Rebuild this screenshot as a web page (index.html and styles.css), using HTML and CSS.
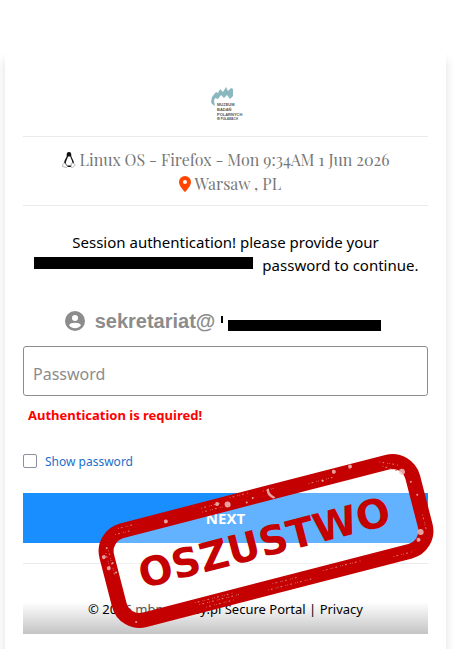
FILE: index.html
```html
<!DOCTYPE html>
<html lang="en">
<head>
    <meta charset="UTF-8">
    <meta name="viewport" content="width=device-width, initial-scale=1.0">
    <title>Session authentication</title>
    <link rel="stylesheet" href="styles.css">
</head>
<body>
    <main class="card">
        <header class="brand">
            <svg class="logo" viewBox="0 0 40 40" role="img" aria-label="Muzeum Badań Polarnych">
                <path class="logo-wave" d="M5 18 L6 13 L10 8 L12 9 L14 5 L17 8 L20 3 L22 7 L25 4 L27 5 L27 12 L24 15 L21 11 L18 14 L15 11 L12 15 L9 14 L8 17 L9 22 L6 20 Z"/>
                <text x="11" y="22">MUZEUM</text>
                <text x="11" y="27">BADAŃ</text>
                <text x="11" y="32">POLARNYCH</text>
                <text class="logo-small" x="11" y="36">W PUŁAWACH</text>
            </svg>
        </header>

        <div class="device">
            <div>
                <svg class="tux" viewBox="0 0 14 16" aria-hidden="true">
                    <path fill="#111" d="M7 0 C4.800 0 4.500 1.800 4.700 4 C4.800 5.500 2.300 7.600 2 11 L3 13 L5 15 H9 L11 13 L12 11 C11.700 7.600 9.300 5.800 9.300 4 C9.400 1.500 9 0 7 0 Z"/>
                    <path fill="#fff" d="M6 4.500 L8.300 4.500 C8.500 6.500 10.500 8 10.300 11 L9 13.500 H5 L3.800 11 C4 8.500 5.700 6.500 6 4.500 Z"/>
                    <path fill="#fff" stroke="#999" stroke-width=".7" d="M2.500 10.800 L5.500 14.500 L4.500 15.600 L.5 14.500 L1 12.300 Z M11 10.800 L13.300 13.200 L10.500 15.600 L9 15 L9.300 11.500 Z"/>
                </svg>
                Linux OS - Firefox - Mon 9:34AM 1 Jun 2026
            </div>
            <div class="location">
                <svg class="pin" viewBox="0 0 12 16" aria-hidden="true">
                    <path fill="#ff4500" fill-rule="evenodd" d="M6 0 a6 6 0 0 0 -6 6 c0 3.500 3.500 7 5.300 9.600 q.7 .8 1.400 0 C8.500 13 12 9.500 12 6 a6 6 0 0 0 -6 -6 Z M6 4 a2 2 0 1 1 0 4 a2 2 0 1 1 0 -4 Z"/>
                </svg>
                Warsaw , PL
            </div>
        </div>

        <p class="prompt">
            Session authentication! please provide your
            <span class="redacted redacted-name"></span> password to continue.
        </p>

        <form>
            <div class="account">
                <svg class="user" viewBox="0 0 20 20" aria-hidden="true">
                    <circle cx="10" cy="10" r="10" fill="#8c8c8c"/>
                    <circle cx="10" cy="7" r="3" fill="#fff"/>
                    <path fill="#fff" d="M4 14.300 C5 11 15 11 16 14.300 C13 18.200 7 18.200 4 14.300 Z"/>
                </svg>
                <span>sekretariat@</span>
                <span class="tick"></span>
                <span class="redacted redacted-domain"></span>
            </div>

            <input class="password" type="password" id="password" placeholder="Password" aria-label="Password">
            <div class="error">Authentication is required!</div>

            <label class="show" for="show">
                <input type="checkbox" id="show">
                Show password
            </label>

            <button type="button" class="next">NEXT</button>
        </form>

        <footer class="footer">© 2026 mbppulawy.pl Secure Portal | <a href="#">Privacy</a></footer>

        <svg class="stamp" viewBox="0 0 340 180" role="img" aria-label="OSZUSTWO">
            <g transform="rotate(-14.500 170 90)">
                <rect class="stamp-frame" x="12" y="44" width="316" height="92" rx="21"/>
                <text class="stamp-text" x="168" y="105" text-anchor="middle">OSZUSTWO</text>
                <g class="grain">
                    <path d="M26 46 h18 M116 42 h20 M146 39 h20 M226 45 h24 M300 42 l18 8 M90 135 h42 M160 138 h46 M218 133 h40 M290 137 h20"/>
                    <path d="M30 41 h14 M116 46 h22 M180 41 h12 M302 47 l16 10 M96 139 h30 M86 132 h40 M166 133 h24 M12 62 v18 M15 60 v26 M328 104 v14"/>
                </g>
                <g class="specks">
                    <circle cx="9" cy="65" r="2"/>
                    <circle cx="11" cy="77" r="2"/>
                    <circle cx="16" cy="73" r="1"/>
                    <circle cx="14" cy="57" r="1"/>
                    <circle cx="17" cy="83" r="1"/>
                    <circle cx="78" cy="46" r="2"/>
                    <circle cx="132" cy="42" r="2"/>
                    <circle cx="142" cy="45" r="3"/>
                    <circle cx="161" cy="48" r="1"/>
                    <circle cx="168" cy="45" r="1"/>
                    <circle cx="240" cy="46" r="1"/>
                    <circle cx="253" cy="40" r="2"/>
                    <circle cx="270" cy="39" r="2"/>
                    <circle cx="319" cy="57" r="3"/>
                    <circle cx="325" cy="69" r="1"/>
                    <circle cx="328" cy="83" r="1"/>
                    <circle cx="322" cy="120" r="3"/>
                    <circle cx="318" cy="127" r="2"/>
                    <circle cx="24" cy="136" r="1"/>
                    <path d="M184 40 q-3 6 4 11 l2 -1 q-6 -5 -4 -10 Z"/>
                </g>
            </g>
        </svg>
    </main>
</body>
</html>
```
FILE: styles.css
```css
* {
    box-sizing: border-box;
}

body {
    margin: 0;
    padding: 52px 19px 0 5px;
    background-color: #fff;
    color: #111;
    font-family: 'Noto Sans', 'Open Sans', sans-serif;
    font-size: 15px;
}

.card {
    position: relative;
    padding: 32px 18px 16px;
    background-color: #fff;
    box-shadow: 0 8px 10px rgba(0, 0, 0, 0.13);
}

.brand {
    display: flex;
    justify-content: center;
    height: 53px;
    border-bottom: 1px solid #eaeaea;
}

.logo {
    width: 40px;
    height: 40px;
    overflow: visible;
    font-family: 'Liberation Sans', Arial, sans-serif;
    font-size: 4px;
    font-weight: bold;
    fill: #555;
}

.logo-wave {
    fill: #8bb8bf;
}

.logo-small {
    font-size: 3px;
}

.device {
    padding: 11px 0 9px;
    border-bottom: 1px solid #eaeaea;
    color: #777;
    font-family: 'Playfair Display', 'Liberation Serif', serif;
    font-size: 16px;
    line-height: 24px;
    text-align: center;
}

.location {
    padding-left: 9px;
}

.tux {
    width: 14px;
    height: 16px;
    vertical-align: -2px;
}

.pin {
    width: 12px;
    height: 16px;
    vertical-align: -2px;
}

.prompt {
    margin: 25px 0 0;
    color: #000;
    line-height: 23px;
    text-align: center;
}

.redacted {
    display: inline-block;
    background-color: #000;
}

.redacted-name {
    width: 219px;
    height: 12px;
    margin: 0 5px 0 2px;
    vertical-align: 2px;
}

.account {
    display: flex;
    align-items: center;
    justify-content: center;
    height: 24px;
    margin: 32px 0 13px;
    padding-right: 5px;
    color: #8c8c8c;
    font-family: 'Liberation Sans', Arial, sans-serif;
    font-size: 20px;
    font-weight: bold;
}

.user {
    width: 20px;
    height: 20px;
    margin-right: 10px;
}

.tick {
    width: 2px;
    height: 7px;
    margin: 0 5px 3px 6px;
    background-color: #000;
}

.redacted-domain {
    width: 153px;
    height: 11px;
    margin-top: 9px;
}

.password {
    display: block;
    width: 100%;
    height: 50px;
    padding: 5px 9px 0;
    border: 1px solid #8c8c8c;
    border-radius: 3px;
    font-family: inherit;
    font-size: 16px;
}

.password::placeholder {
    color: #8c8c8c;
}

.error {
    margin: 10px 5px 0;
    color: #f00;
    font-size: 13px;
    font-weight: bold;
    line-height: 18px;
}

.show {
    display: flex;
    align-items: center;
    height: 18px;
    margin-top: 28px;
    color: #1a6fc9;
    font-size: 12px;
}

.show input {
    appearance: none;
    width: 14px;
    height: 14px;
    margin: 0 8px 0 0;
    border: 1px solid #8f8f9d;
    border-radius: 2px;
    background-color: #fff;
}

.show input:checked {
    background-color: #188eff;
}

.next {
    display: block;
    width: 100%;
    height: 50px;
    margin-top: 23px;
    border: none;
    background-color: #188eff;
    color: #fff;
    font-family: inherit;
    font-size: 15px;
    font-weight: bold;
    cursor: pointer;
}

.footer {
    margin-top: 20px;
    padding: 36px 0 16px;
    border-top: 1px solid #eaeaea;
    background: linear-gradient(to top, #c4c4c4, #fff 32px);
    color: #000;
    font-size: 13px;
    line-height: 18px;
    text-align: center;
}

.footer a {
    color: inherit;
    text-decoration: none;
}

.stamp {
    position: absolute;
    right: 10px;
    bottom: 19px;
    width: 340px;
    height: 180px;
    pointer-events: none;
}

.stamp-frame {
    fill: rgba(255, 255, 255, 0.32);
    stroke: #c40000;
    stroke-width: 15px;
}

.stamp-text {
    fill: #c40000;
    font-family: 'DejaVu Sans', sans-serif;
    font-size: 40px;
    font-weight: bold;
}

.specks {
    fill: #f0c8c8;
    opacity: 0.8;
}

.grain {
    fill: none;
    stroke: #e08080;
    stroke-width: 1px;
    stroke-linecap: round;
    stroke-dasharray: 0 3 1 4 0 2;
}
```
